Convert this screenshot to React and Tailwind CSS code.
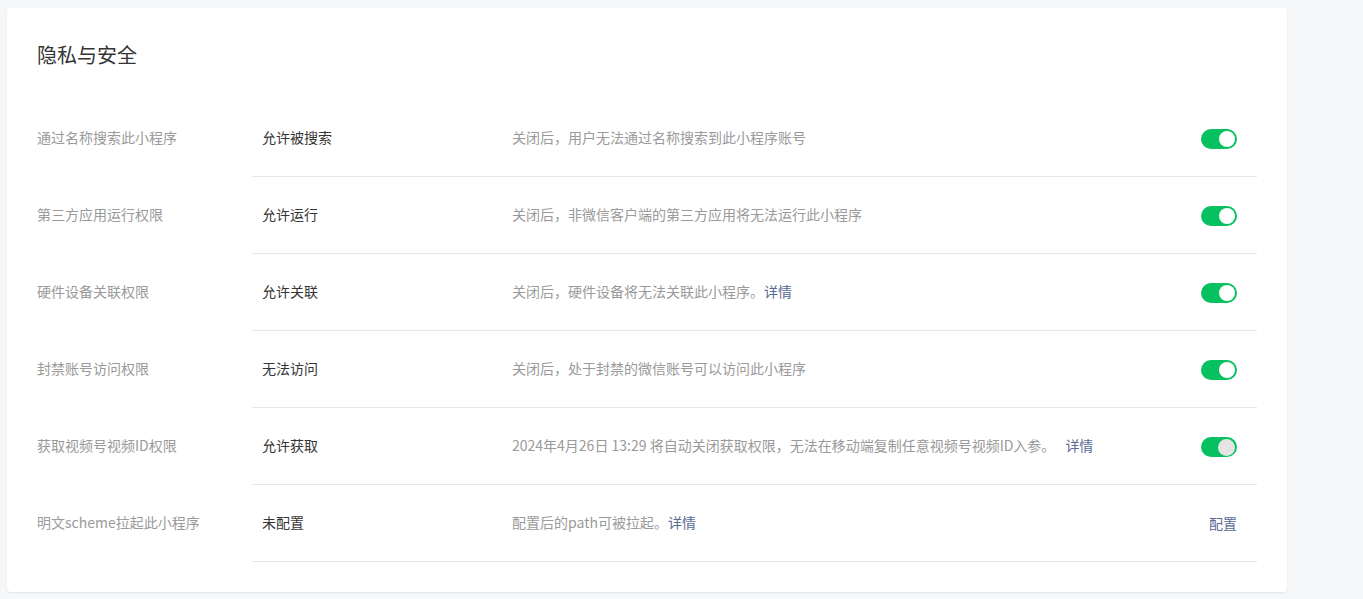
import React from 'react';

const rows = [
  {
    label: '通过名称搜索此小程序',
    value: '允许被搜索',
    desc: '关闭后，用户无法通过名称搜索到此小程序账号',
    action: 'toggle',
  },
  {
    label: '第三方应用运行权限',
    value: '允许运行',
    desc: '关闭后，非微信客户端的第三方应用将无法运行此小程序',
    action: 'toggle',
  },
  {
    label: '硬件设备关联权限',
    value: '允许关联',
    desc: '关闭后，硬件设备将无法关联此小程序。',
    link: '详情',
    action: 'toggle',
  },
  {
    label: '封禁账号访问权限',
    value: '无法访问',
    desc: '关闭后，处于封禁的微信账号可以访问此小程序',
    action: 'toggle',
  },
  {
    label: '获取视频号视频ID权限',
    value: '允许获取',
    desc: '2024年4月26日 13:29 将自动关闭获取权限，无法在移动端复制任意视频号视频ID入参。',
    link: '详情',
    linkGap: true,
    action: 'toggle',
    dim: true,
  },
  {
    label: '明文scheme拉起此小程序',
    value: '未配置',
    desc: '配置后的path可被拉起。',
    link: '详情',
    action: 'config',
  },
];

const Toggle = ({ dim }) => (
  <div className="w-9 h-5 rounded-full bg-[#07c160] flex items-center justify-end px-[2px]">
    <div className={dim ? 'w-[17px] h-[17px] rounded-full bg-[#e4e4e4]' : 'w-4 h-4 rounded-full bg-white'} />
  </div>
);

const App = () => {
  return (
    <div
      className="min-h-[599px] bg-[#f6f7f9] pt-2 pl-[7px] pr-[76px] pb-[7px]"
      style={{ fontFamily: '"Noto Sans CJK SC", "Liberation Sans", sans-serif' }}
    >
      <div className="bg-white rounded shadow-[0_1px_2px_rgba(0,0,0,0.08)] pl-[30px] pr-[30px] pt-[33px] pb-[30px]">
        <h2 className="text-[20px] leading-7 text-[#353535] font-normal mb-[31px]">隐私与安全</h2>
        <div>
          {rows.map((row) => (
            <div key={row.label} className="flex">
              <div className="w-[215px] shrink-0 h-[77px] flex items-center pb-[3px] text-sm text-[#9a9a9a]">
                {row.label}
              </div>
              <div className="flex-1 flex items-center h-[77px] border-b border-[#e5e6eb]">
                <div className="w-[260px] shrink-0 pl-[10px] pb-[2px] text-sm text-[#353535]">{row.value}</div>
                <div className="flex-1 pb-[2px] text-sm text-[#9a9a9a]">
                  {row.desc}
                  {row.link && (
                    <a className={`text-[#576b95] ${row.linkGap ? 'ml-[10px]' : ''}`}>{row.link}</a>
                  )}
                </div>
                <div className="pr-5 pt-[2px]">
                  {row.action === 'toggle' ? (
                    <Toggle dim={row.dim} />
                  ) : (
                    <a className="block pb-[3px] text-sm text-[#576b95]">配置</a>
                  )}
                </div>
              </div>
            </div>
          ))}
        </div>
      </div>
    </div>
  );
};

export default App;
